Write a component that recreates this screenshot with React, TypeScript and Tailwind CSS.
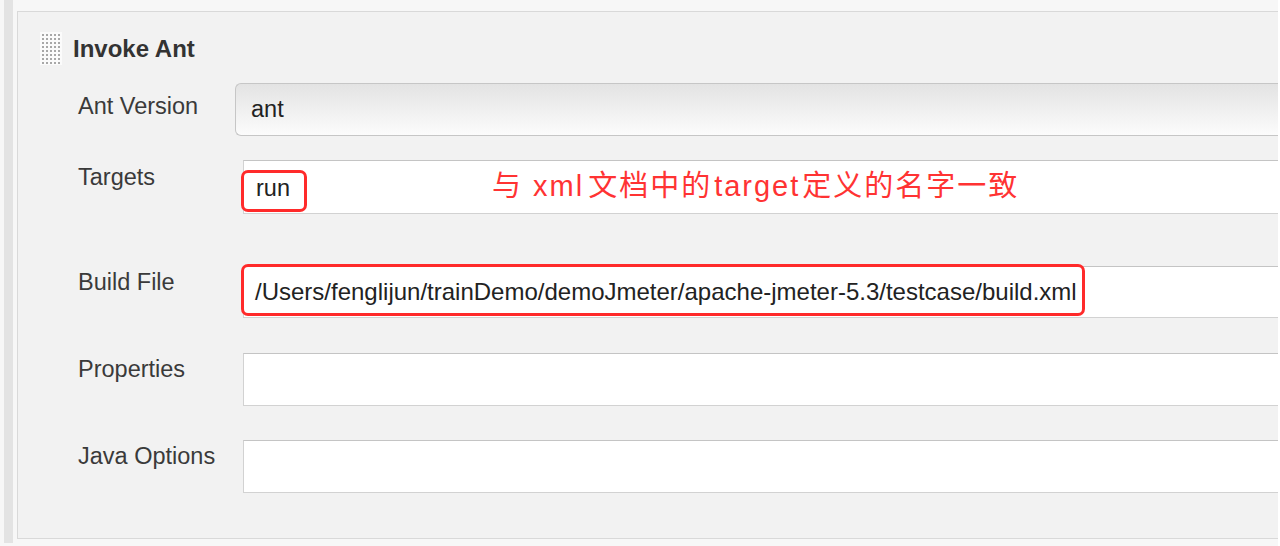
import React from "react";

function Grip() {
  const dots = [];
  for (let i = 0; i < 5; i++) {
    for (let j = 0; j < 8; j++) {
      dots.push(<rect key={`${i}-${j}`} x={2 + i * 4} y={2 + j * 4} width="2" height="2" fill="#a8a8a8" />);
    }
  }
  return (
    <svg width="22" height="33" viewBox="0 0 22 33" className="shrink-0">
      <rect x="0" y="0" width="22" height="33" fill="#fbfbfb" />
      {dots}
    </svg>
  );
}

function Row({ label, labelPad, mt, h, children }: { label: string; labelPad: string; mt: string; h: string; children?: React.ReactNode }) {
  return (
    <div className={`flex ${mt}`}>
      <div className={`w-[165px] shrink-0 ${labelPad} text-[23.5px] leading-[24px] text-[#3a3a3a]`}>{label}</div>
      <div className={`flex-1 ${h} relative`}>{children}</div>
    </div>
  );
}

export default function App() {
  return (
    <div className="w-[1280px] h-[546px] bg-[#f7f7f7] flex overflow-hidden font-['Liberation_Sans',Arial,sans-serif]">
      <div className="w-[4px] shrink-0" />
      <div className="w-[9px] shrink-0 h-[543px] bg-[#e3e3e3]" />
      <div className="w-[4px] shrink-0" />
      <div className="flex-1 mt-[11px] h-[528px] border border-r-0 border-[#d9d9d9] bg-[#f2f2f2] pl-[22px] pt-[20px]">
        <div className="flex items-center h-[33px] gap-[11px]">
          <Grip />
          <h2 className="text-[24px] leading-[24px] font-bold text-[#333]">Invoke Ant</h2>
        </div>
        <div className="ml-[38px]">
          <Row label="Ant Version" labelPad="pt-[11px]" mt="mt-[18px]" h="h-[53px]">
            <div className="ml-[-8px] h-full flex items-center pl-[15px] rounded-l-[6px] border border-r-0 border-[#c6c6c6] bg-gradient-to-b from-[#e3e3e3] to-[#fcfcfc] text-[23.5px] text-[#222]">
              ant
            </div>
          </Row>
          <Row label="Targets" labelPad="pt-[5px]" mt="mt-[24px]" h="h-[54px]">
            <div className="h-full flex items-center pt-[3px] pl-[12px] bg-white border border-r-0 border-[#d2d2d2] border-t-[#c4c4c4] text-[23.5px] text-[#222]">
              run
            </div>
            <div className="absolute left-[-2px] top-[10px] w-[66px] h-[42px] border-[3px] border-[#ff2a2a] rounded-[7px]" />
            <div className="absolute left-[249px] top-0 h-full flex items-center text-[29px] tracking-[2px] text-[#ff3333] font-['Liberation_Sans','Noto_Sans_CJK_SC',sans-serif] whitespace-nowrap">
              <span>与</span>
              <span className="pl-[10px] pr-[4px]">xml</span>
              <span>文档中的</span>
              <span className="px-[2px]">target</span>
              <span>定义的名字一致</span>
            </div>
          </Row>
          <Row label="Build File" labelPad="pt-[4px]" mt="mt-[52px]" h="h-[52px]">
            <div className="h-full flex items-center pl-[11px] bg-white border border-r-0 border-[#d2d2d2] border-t-[#c4c4c4] text-[24px] text-[#222] whitespace-nowrap">
              /Users/fenglijun/trainDemo/demoJmeter/apache-jmeter-5.3/testcase/build.xml
            </div>
            <div className="absolute left-[-2px] top-[-2px] w-[844px] h-[52px] border-[3px] border-[#ff2a2a] rounded-[7px]" />
          </Row>
          <Row label="Properties" labelPad="pt-[4px]" mt="mt-[35px]" h="h-[53px]">
            <div className="h-full bg-white border border-r-0 border-[#d2d2d2] border-t-[#c4c4c4]" />
          </Row>
          <Row label="Java Options" labelPad="pt-[4px]" mt="mt-[34px]" h="h-[53px]">
            <div className="h-full bg-white border border-r-0 border-[#d2d2d2] border-t-[#c4c4c4]" />
          </Row>
        </div>
      </div>
      <div className="w-[2px] shrink-0 bg-white" />
    </div>
  );
}
